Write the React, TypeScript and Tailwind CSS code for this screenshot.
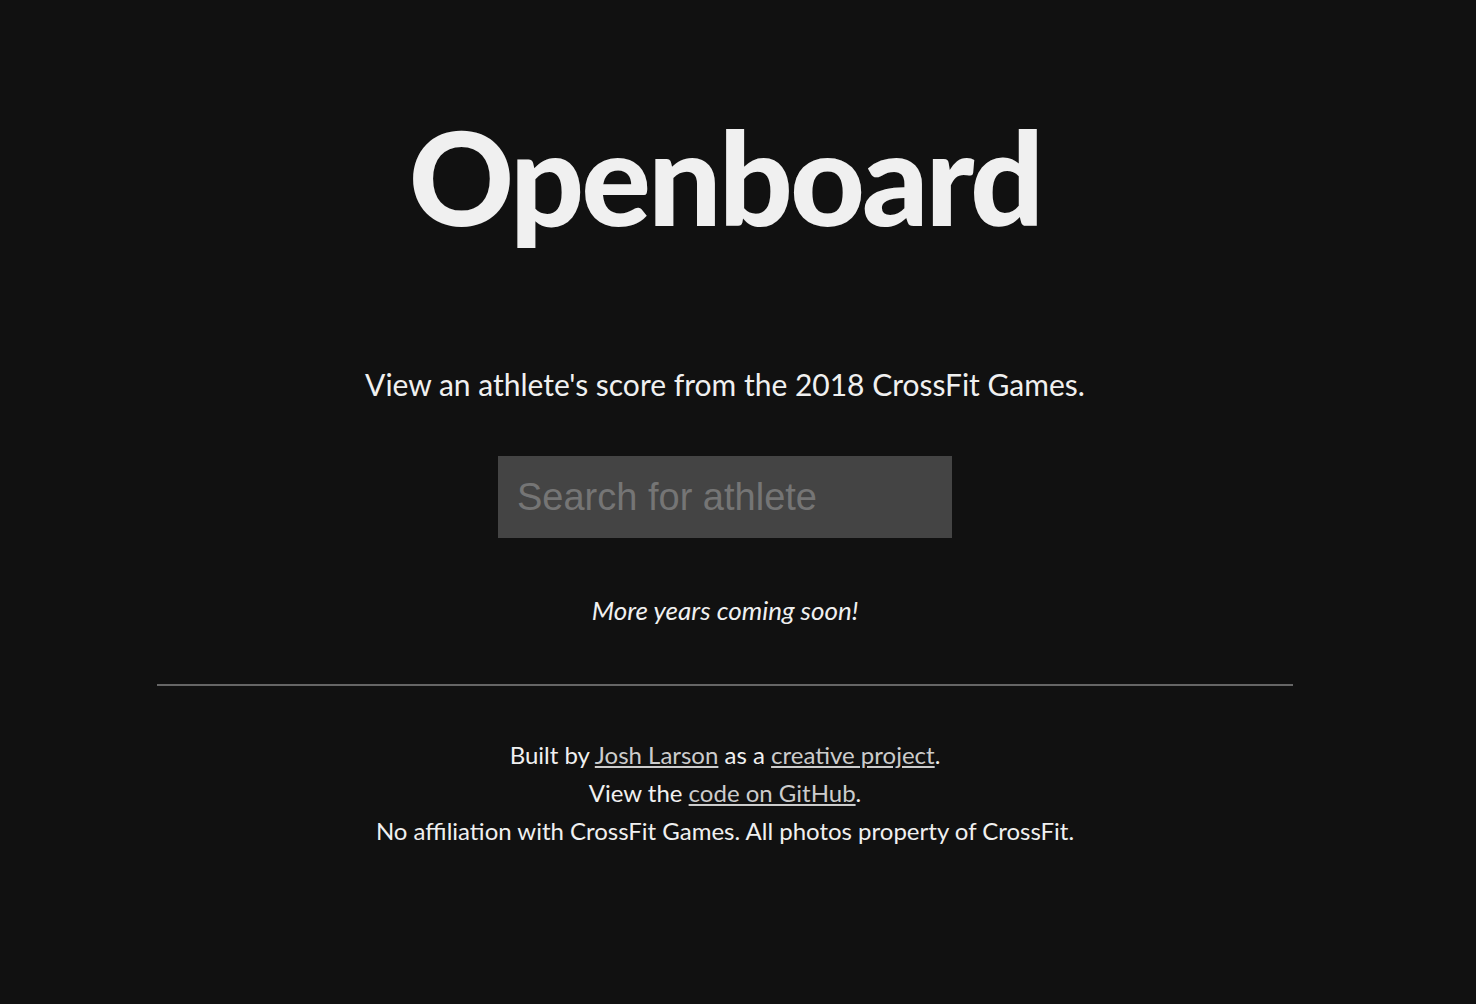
export default function App() {
  return (
    <div className="min-h-screen bg-[#111111] text-[#f0f0f0] font-['Lato','Noto_Sans',sans-serif] flex flex-col items-center pr-[26px]">
      <h1 className="mt-[96px] text-[130px] leading-[160px] font-black tracking-[-3px]">Openboard</h1>
      <p className="mt-[108px] text-[30px] leading-[40px]">
        View an athlete's score from the 2018 CrossFit Games.
      </p>
      <input
        type="text"
        placeholder="Search for athlete"
        className="mt-[52px] w-[454px] h-[82px] bg-[#444444] px-[19px] text-[38px] text-[#f0f0f0] placeholder:text-[#757575] font-['Liberation_Sans',Arial,sans-serif] outline-none"
      />
      <p className="mt-[56px] text-[26px] leading-[32px] italic">More years coming soon!</p>
      <hr className="mt-[58px] w-[1136px] border-0 border-t-2 border-[#666666]" />
      <div className="mt-[50px] text-[24px] leading-[38px] text-center">
        <p>
          Built by <a href="#" className="underline text-[#cccccc]">Josh Larson</a> as a{' '}
          <a href="#" className="underline text-[#cccccc]">creative project</a>.
        </p>
        <p>
          View the <a href="#" className="underline text-[#cccccc]">code on GitHub</a>.
        </p>
        <p>No affiliation with CrossFit Games. All photos property of CrossFit.</p>
      </div>
    </div>
  );
}
